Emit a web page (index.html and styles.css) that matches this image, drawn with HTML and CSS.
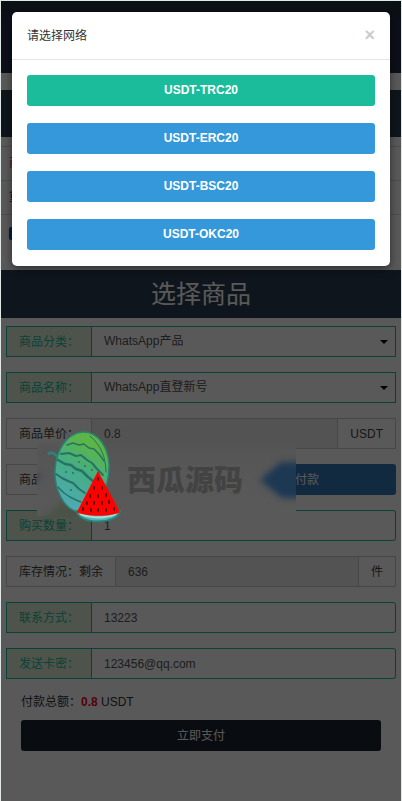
FILE: index.html
```html
<!DOCTYPE html>
<html lang="zh-CN">
<head>
    <meta charset="UTF-8">
    <meta name="viewport" content="width=device-width, initial-scale=1.0">
    <title>选择商品</title>
    <link rel="stylesheet" href="styles.css">
</head>
<body>

<div class="page">
    <div class="header"></div>
    <div class="bar"></div>
    <div class="notice">
        <div class="notice-row notice-red">商</div>
        <div class="notice-row">重</div>
        <div class="notice-row"><span class="notice-tag"></span></div>
    </div>

    <h1>选择商品</h1>

    <form class="order-form">
        <div class="form-group active">
            <label for="category">商品分类：</label>
            <div class="select-box">
                <select id="category">
                    <option>WhatsApp产品</option>
                </select>
            </div>
        </div>
        <div class="form-group active">
            <label for="goods">商品名称：</label>
            <div class="select-box">
                <select id="goods">
                    <option>WhatsApp直登新号</option>
                </select>
            </div>
        </div>
        <div class="form-group">
            <label for="price">商品单价：</label>
            <input type="text" id="price" value="0.8" readonly>
            <span class="unit">USDT</span>
        </div>
        <div class="form-group">
            <span class="name">商品</span>
            <button type="button" class="btn-info">付款</button>
        </div>
        <div class="form-group active">
            <label for="quantity">购买数量：</label>
            <input type="text" id="quantity" value="1">
        </div>
        <div class="form-group">
            <label for="stock">库存情况：剩余</label>
            <input type="text" id="stock" value="636" readonly>
            <span class="unit">件</span>
        </div>
        <div class="form-group active">
            <label for="contact">联系方式：</label>
            <input type="text" id="contact" value="13223">
        </div>
        <div class="form-group active">
            <label for="email">发送卡密：</label>
            <input type="text" id="email" value="123456@qq.com">
        </div>
        <div class="total">付款总额：<b>0.8</b> USDT</div>
        <button type="button" class="btn-pay">立即支付</button>
    </form>

    <div class="backdrop"></div>

    <div class="watermark">
        <svg width="260" height="100" viewBox="0 0 260 100" aria-hidden="true">
            <defs>
                <linearGradient id="melon" x1="0.7" y1="0" x2="0.3" y2="1">
                    <stop offset="0.15" stop-color="#5cb547"/>
                    <stop offset="0.5" stop-color="#45ad85"/>
                    <stop offset="1" stop-color="#50a9b8"/>
                </linearGradient>
                <linearGradient id="fade" x1="0" y1="0" x2="0" y2="1">
                    <stop offset="0" stop-color="#545454" stop-opacity="0"/>
                    <stop offset="0.1" stop-color="#555"/>
                    <stop offset="0.5" stop-color="#585858"/>
                    <stop offset="1" stop-color="#595959"/>
                </linearGradient>
                <filter id="soft" x="-30%" y="-30%" width="160%" height="160%">
                    <feGaussianBlur stdDeviation="3"/>
                </filter>
                <clipPath id="patch"><rect x="0" y="8" width="259" height="81"/></clipPath>
            </defs>
            <rect x="0" y="13" width="259" height="75" fill="url(#fade)"/>
            <g clip-path="url(#patch)">
                <g filter="url(#soft)">
                    <path d="M223 52 L244 34 H270 V70 H245 Z" fill="#1c3853"/>
                    <path d="M0 94 L22 76 L40 68 L54 80 V94 Z" fill="#4b5349"/>
                    <path d="M-4 42 L7 48 L-4 58 Z" fill="#43484f"/>
                </g>
            </g>
            <!-- whole melon -->
            <path d="M11 26 C15 23 19 26 22 31" fill="none" stroke="#2c8074" stroke-width="3"/>
            <path d="M45 4 C61 3 71 19 72 36 C73 59 60 83 42 84 C27 82 17 61 18 42 C19 23 29 6 45 4 Z" fill="url(#melon)" stroke="#2c8074" stroke-width="1.5"/>
            <g fill="none" stroke="#257365" stroke-width="2" stroke-linecap="round" stroke-linejoin="round">
                <path d="M30 17 L36 15 L42 17 L47 16 L52 20 L57 21 L62 26 L67 33" stroke-width="1.5"/>
                <path d="M24 26 L32 25 L39 28 L44 27 L50 32 L55 35 L60 41 L66 47"/>
                <path d="M21 32 L28 36 L34 37 L39 41 L45 43 L51 49 L56 53" stroke-width="2.5"/>
                <path d="M19 46 L25 50 L31 53 L36 55 L42 61 L48 65"/>
                <path d="M21 59 L27 65 L33 69 L39 72 L44 74" stroke-width="1.5"/>
                <path d="M53 8 C64 17 69 30 69 44" stroke-width="1"/>
            </g>
            <g fill="#257365">
                <circle cx="42" cy="34" r="1"/><circle cx="48" cy="38" r="1"/>
                <circle cx="36" cy="45" r="1"/><circle cx="29" cy="44" r="1"/>
                <circle cx="55" cy="42" r="1"/><circle cx="34" cy="62" r="1"/>
            </g>
            <!-- cut slice -->
            <path d="M40 83 C41 97 81 97 83 83 Z" fill="#53b4ba" stroke="#2c8074" stroke-width="2"/>
            <path d="M41 83 C49 90 74 90 83 83 L79 87 C68 92 53 91 43 87 Z" fill="#a8ded0"/>
            <path d="M61 43 L83 84 C76 89 48 89 40 84 Z" fill="#ff0000"/>
            <g fill="#35170d">
                <ellipse cx="61" cy="51" rx="1" ry="2"/>
                <ellipse cx="57" cy="60" rx="1" ry="2"/><ellipse cx="65" cy="60" rx="1" ry="2"/>
                <ellipse cx="53" cy="68" rx="1" ry="2"/><ellipse cx="61" cy="68" rx="1" ry="2"/><ellipse cx="69" cy="67" rx="1" ry="2"/>
                <ellipse cx="50" cy="75" rx="1" ry="2"/><ellipse cx="57" cy="75" rx="1" ry="2"/><ellipse cx="65" cy="75" rx="1" ry="2"/><ellipse cx="72" cy="74" rx="1" ry="2"/>
                <ellipse cx="46" cy="81" rx="1" ry="2"/><ellipse cx="54" cy="82" rx="1" ry="2"/><ellipse cx="61" cy="82" rx="1" ry="2"/><ellipse cx="69" cy="82" rx="1" ry="2"/><ellipse cx="77" cy="81" rx="1" ry="2"/>
            </g>
        </svg>
        <span class="watermark-text">西瓜源码</span>
    </div>

    <div class="modal" role="dialog" aria-labelledby="modal-title">
        <div class="modal-header">
            <span id="modal-title">请选择网络</span>
            <button type="button" class="close" aria-label="Close">×</button>
        </div>
        <div class="modal-body">
            <button type="button" class="btn-network selected">USDT-TRC20</button>
            <button type="button" class="btn-network">USDT-ERC20</button>
            <button type="button" class="btn-network">USDT-BSC20</button>
            <button type="button" class="btn-network">USDT-OKC20</button>
        </div>
    </div>
</div>

</body>
</html>
```

FILE: styles.css
```css
* {
    box-sizing: border-box;
}
body {
    margin: 0;
    font-family: "Liberation Sans", Arial, "Noto Sans CJK SC", sans-serif;
    font-size: 12px;
    color: #555;
    background: #fff;
}
button, input, select {
    font-family: inherit;
    font-size: 12px;
    margin: 0;
}
button {
    padding: 0 12px 2px;
    border: none;
    border-radius: 3px;
    cursor: pointer;
}
.page {
    position: relative;
    min-height: 100vh;
    border: 1px solid #dfe8e4;
    border-bottom: none;
}
.header {
    height: 72px;
    background: linear-gradient(#1c3035, #262b48 30%);
}
.bar {
    height: 47px;
    margin-top: 17px;
    background: #2c3e50;
}
.notice {
    margin-top: 9px;
    height: 124px;
}
.notice-row {
    height: 34px;
    padding: 0 8px;
    line-height: 33px;
    border-top: 1px solid #ddd;
    color: #333;
}
.notice-red {
    color: #c7254e;
}
.notice-tag {
    display: block;
    width: 20px;
    height: 13px;
    margin-top: 12px;
    border-radius: 2px;
    background: #0058c8;
}
h1 {
    margin: 0;
    height: 48px;
    line-height: 48px;
    text-align: center;
    font-size: 25px;
    font-weight: normal;
    color: #fff;
    background: #2c3e50;
}
.order-form {
    padding: 8px 5px;
}
.form-group {
    display: flex;
    height: 31px;
    margin-bottom: 15px;
}
.form-group label, .name, .unit {
    flex: none;
    padding: 0 12px;
    line-height: 31px;
    border: 1px solid #ccc;
    color: #444;
}
.form-group input, .select-box {
    flex: 1;
    min-width: 0;
    border: 1px solid #ccc;
    border-left: none;
}
.form-group input {
    padding: 0 12px;
    color: #555;
    background: #fff;
}
.form-group input[readonly] {
    background: #eee;
}
.form-group .unit {
    border-left: none;
}
.form-group.active label {
    color: #1abc9c;
    border-color: #1abc9c;
    background: #dff0d8;
}
.active input, .active .select-box {
    border-color: #1abc9c;
}
.active input {
    border-radius: 0 3px 3px 0;
}
.select-box {
    position: relative;
}
.select-box select {
    display: block;
    width: 100%;
    height: 29px;
    padding: 0 12px 2px;
    border: none;
    color: #555;
    background: #fff;
    appearance: none;
}
.select-box::after {
    content: "";
    position: absolute;
    right: 7px;
    top: 13px;
    border: 4px solid transparent;
    border-top-color: #000;
    border-bottom: none;
    pointer-events: none;
}
.form-group .name {
    flex: 1;
    border-right: none;
}
.btn-info {
    width: 178px;
    color: #fff;
    background: #337ab7;
}
.total {
    padding: 0 15px;
    line-height: 16px;
    color: #333;
}
.total b {
    color: #f00020;
}
.btn-pay {
    display: block;
    width: calc(100% - 30px);
    height: 31px;
    margin: 10px 15px 0;
    color: #fff;
    background: #1a2430;
}
.backdrop {
    position: absolute;
    inset: 0;
    background: rgba(0, 0, 0, 0.65);
}
.watermark {
    position: absolute;
    left: 36px;
    top: 427px;
}
.watermark svg {
    display: block;
}
.watermark-text {
    position: absolute;
    left: 90px;
    top: 33px;
    line-height: 40px;
    font-size: 29px;
    font-weight: 900;
    color: #434343;
    white-space: nowrap;
}
.modal {
    position: absolute;
    left: 11px;
    right: 11px;
    top: 11px;
    border-radius: 5px;
    background: #fff;
    box-shadow: 0 3px 9px rgba(0, 0, 0, 0.5);
}
.modal-header {
    display: flex;
    align-items: center;
    justify-content: space-between;
    height: 48px;
    padding: 0 15px 2px;
    border-bottom: 1px solid #e5e5e5;
    color: #333;
}
.close {
    padding: 0;
    font-size: 18px;
    font-weight: bold;
    line-height: 18px;
    color: #ccc;
    background: none;
}
.modal-body {
    display: flex;
    flex-direction: column;
    gap: 17px;
    padding: 15px 15px 16px;
}
.btn-network {
    height: 31px;
    font-weight: bold;
    color: #fff;
    background: #3498db;
}
.btn-network.selected {
    background: #1abc9c;
}
```
